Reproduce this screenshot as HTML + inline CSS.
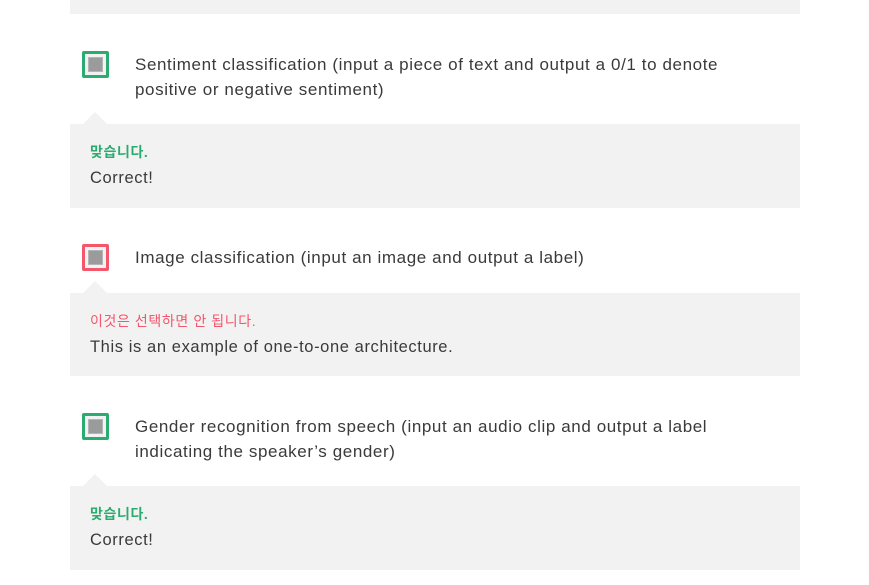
<!DOCTYPE html>
<html><head><meta charset="utf-8"><style>
*{margin:0;padding:0;box-sizing:border-box}
body{width:869px;height:585px;background:#fff;position:relative;overflow:hidden;font-family:"Liberation Sans","Noto Sans CJK KR",sans-serif;color:#3a3a3a}
.bar{position:absolute;left:70px;width:730px;background:#f2f2f2}
.cb{position:absolute;left:82px;width:27px;height:27px;border:3px solid #2bab6f;border-radius:2px;background:#f2f2f2}
.cb.r{border-color:#f4566c}
.cb i{position:absolute;left:3px;top:3px;width:15px;height:15px;background:#9b9b9b;border:1px solid #b5b5b5}
.t{position:absolute;left:135px;font-size:17px;line-height:25px;width:600px;letter-spacing:0.6px}
.arr{position:absolute;left:83px;width:0;height:0;border-left:12px solid transparent;border-right:12px solid transparent;border-bottom:12px solid #f2f2f2}
.k{position:absolute;left:90px;font-size:14px;line-height:20px;font-weight:bold;letter-spacing:0.6px}
.g{color:#2bab6f}.rd{color:#f4566c}
.m{position:absolute;left:90px;font-size:16.5px;line-height:22px;letter-spacing:0.6px}
</style></head><body>
<div class="bar" style="top:0;height:14px"></div>

<div class="cb" style="top:51px"><i></i></div>
<div class="t" style="top:52px">Sentiment classification (input a piece of text and output a 0/1 to denote<br>positive or negative sentiment)</div>
<div class="arr" style="top:112px"></div>
<div class="bar" style="top:124px;height:84px"></div>
<div class="k g" style="top:142px">맞습니다.</div>
<div class="m" style="top:167px">Correct!</div>

<div class="cb r" style="top:244px"><i></i></div>
<div class="t" style="top:245px">Image classification (input an image and output a label)</div>
<div class="arr" style="top:281px"></div>
<div class="bar" style="top:293px;height:83px"></div>
<div class="k rd" style="top:311px;font-weight:normal">이것은 선택하면 안 됩니다.</div>
<div class="m" style="top:336px">This is an example of one-to-one architecture.</div>

<div class="cb" style="top:413px"><i></i></div>
<div class="t" style="top:414px">Gender recognition from speech (input an audio clip and output a label<br>indicating the speaker’s gender)</div>
<div class="arr" style="top:474px"></div>
<div class="bar" style="top:486px;height:84px"></div>
<div class="k g" style="top:504px">맞습니다.</div>
<div class="m" style="top:529px">Correct!</div>
</body></html>
